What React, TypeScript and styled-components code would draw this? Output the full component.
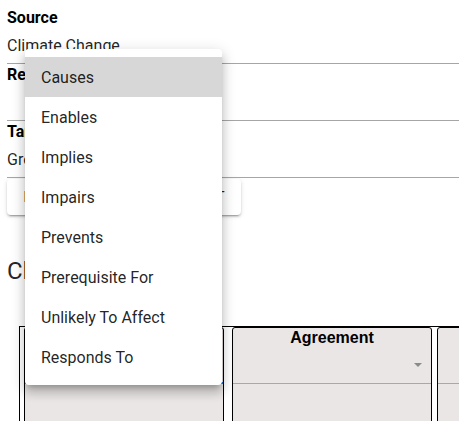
import styled, { createGlobalStyle } from "styled-components";

const menuOptions = [
  "Causes",
  "Enables",
  "Implies",
  "Impairs",
  "Prevents",
  "Prerequisite For",
  "Unlikely To Affect",
  "Responds To",
];

const fields = [
  { label: "Source", value: "Climate Change" },
  { label: "Relationship", value: "" },
  { label: "Target", value: "Greenhouse Gas Emissions" },
];

const columns = [
  { title: "Claim", width: 200, gap: 0, focused: true },
  { title: "Agreement", width: 200, gap: 8, focused: false },
  { title: "Notes", width: 200, gap: 5, focused: false },
];

const App = () => {
  return (
    <>
      <GlobalStyle />
      <SPage>
        {fields.map((f) => (
          <SField key={f.label}>
            <SLabel>{f.label}</SLabel>
            <SInput>{f.value}</SInput>
          </SField>
        ))}
        <SCardButton>Reverse Source and Target</SCardButton>
        <SHeading>Claims</SHeading>
        <STable>
          {columns.map((c) => (
            <SColumn key={c.title} $width={c.width} $gap={c.gap}>
              <SColumnTitle>{c.title}</SColumnTitle>
              <SFilter $focused={c.focused}>
                <SCaret />
              </SFilter>
            </SColumn>
          ))}
        </STable>
        <SMenu>
          {menuOptions.map((o, i) => (
            <SMenuItem key={o} $active={i === 0}>
              {o}
            </SMenuItem>
          ))}
        </SMenu>
      </SPage>
    </>
  );
};

const GlobalStyle = createGlobalStyle`
  html, body {
    margin: 0;
    padding: 0;
    overflow: hidden;
    background: #fff;
  }
  body {
    font-family: Roboto, "Liberation Sans", sans-serif;
  }
`;

const SPage = styled.div`
  position: relative;
  width: 459px;
  height: 421px;
  box-sizing: border-box;
  padding: 8px 0 0 7px;
  overflow: hidden;
`;

const SField = styled.div`
  display: flex;
  flex-direction: column;
  margin-bottom: 1px;
`;

const SLabel = styled.div`
  padding-top: 1px;
  font-family: Roboto, "Liberation Sans", sans-serif;
  font-weight: 700;
  font-size: 16px;
  line-height: 18px;
  color: #000;
`;

const SInput = styled.div`
  margin-top: 5px;
  height: 32px;
  box-sizing: border-box;
  padding: 2px 0 7px;
  font-size: 16px;
  line-height: 23px;
  color: rgba(0, 0, 0, 0.87);
  border-bottom: 1px solid #a6a6a6;
`;

const SCardButton = styled.div`
  display: flex;
  align-items: center;
  justify-content: center;
  width: 234px;
  height: 36px;
  box-sizing: border-box;
  border-radius: 4px;
  background: #fff;
  box-shadow: 0 3px 1px -2px rgba(0, 0, 0, 0.2), 0 2px 2px 0 rgba(0, 0, 0, 0.14),
    0 1px 5px 0 rgba(0, 0, 0, 0.12);
  font-size: 14px;
  font-weight: 400;
  text-transform: uppercase;
  white-space: nowrap;
  color: rgba(0, 0, 0, 0.87);
`;

const SHeading = styled.h2`
  margin: 40px 0 0;
  font-size: 24px;
  font-weight: 400;
  line-height: 32px;
  color: rgba(0, 0, 0, 0.87);
`;

const STable = styled.div`
  display: flex;
  align-items: flex-start;
  margin: 39px 0 0 12px;
  padding-left: 4px;
  border-top: 1px solid #000;
  border-left: 1px solid #000;
  height: 120px;
`;

const SColumn = styled.div<{ $width: number; $gap: number }>`
  flex: 0 0 ${(p) => p.$width}px;
  margin-left: ${(p) => p.$gap}px;
  height: 120px;
  box-sizing: border-box;
  border: 1px solid #000;
  border-radius: 3px 3px 0 0;
  background: #ebe6e6;
`;

const SColumnTitle = styled.div`
  font-family: "Liberation Sans", Arial, sans-serif;
  font-weight: 700;
  font-size: 16px;
  line-height: 19px;
  text-align: center;
  color: #000;
`;

const SFilter = styled.div<{ $focused: boolean }>`
  display: flex;
  align-items: center;
  justify-content: flex-end;
  height: 37px;
  box-sizing: border-box;
  padding-right: 9px;
  border-bottom: ${(p) => (p.$focused ? "2px solid #1976d2" : "1px solid #a8a8a8")};
`;

const SCaret = styled.span`
  width: 0;
  height: 0;
  border-left: 4px solid transparent;
  border-right: 4px solid transparent;
  border-top: 4px solid #8a8a8a;
`;

const SMenu = styled.div`
  position: absolute;
  left: 25px;
  top: 49px;
  width: 197px;
  padding: 8px 0;
  background: #fff;
  border-radius: 4px;
  box-shadow: 0 5px 5px -3px rgba(0, 0, 0, 0.2), 0 8px 10px 1px rgba(0, 0, 0, 0.14),
    0 3px 14px 2px rgba(0, 0, 0, 0.12);
`;

const SMenuItem = styled.div<{ $active: boolean }>`
  display: flex;
  align-items: center;
  height: 40px;
  padding: 0 16px;
  font-size: 16px;
  color: rgba(0, 0, 0, 0.87);
  background: ${(p) => (p.$active ? "#d7d7d7" : "transparent")};
  white-space: nowrap;
`;

export default App;
